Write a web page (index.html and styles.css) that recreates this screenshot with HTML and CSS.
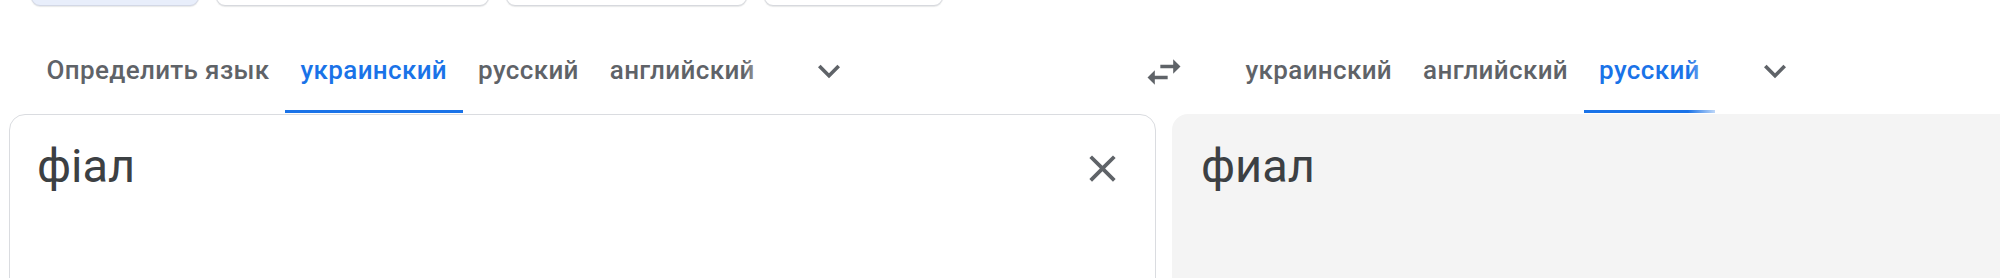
FILE: index.html
```html
<!DOCTYPE html>
<html lang="ru">
<head>
<meta charset="utf-8">
<title>Переводчик</title>
<link rel="stylesheet" href="styles.css">
</head>
<body>
<div class="page">
  <div class="chips">
    <div class="chip chip-active"></div>
    <div class="chip chip-2"></div>
    <div class="chip chip-3"></div>
    <div class="chip chip-4"></div>
  </div>

  <div class="tabrow">
    <div class="lang-section lang-source">
      <div class="tabs">
        <div class="tab">Определить язык</div>
        <div class="tab tab-active">украинский</div>
        <div class="tab">русский</div>
        <div class="tab">английский</div>
        <div class="fade"></div>
      </div>
      <button class="iconbtn chevron" aria-label="Другие языки">
        <svg viewBox="0 0 24 24" width="44" height="44"><path d="M16.59 8.59L12 13.17 7.41 8.59 6 10l6 6 6-6z"/></svg>
      </button>
    </div>
    <button class="iconbtn swap" aria-label="Поменять языки">
      <svg viewBox="0 0 24 24" width="44" height="44"><path d="M6.99 11L3 15l3.99 4v-3H14v-2H6.99v-3zM21 9l-3.99-4v3H10v2h7.01v3L21 9z"/></svg>
    </button>
    <div class="lang-section lang-target">
      <div class="tabs tabs-target">
        <div class="tab">украинский</div>
        <div class="tab">английский</div>
        <div class="tab tab-active">русский</div>
        <div class="fade"></div>
      </div>
      <button class="iconbtn chevron chevron-target" aria-label="Другие языки">
        <svg viewBox="0 0 24 24" width="44" height="44"><path d="M16.59 8.59L12 13.17 7.41 8.59 6 10l6 6 6-6z"/></svg>
      </button>
    </div>
  </div>

  <div class="panels">
    <div class="panel panel-source">
      <div class="text">фіал</div>
      <button class="iconbtn close" aria-label="Очистить">
        <svg viewBox="0 0 24 24" width="45" height="45"><path d="M19 6.41L17.59 5 12 10.59 6.41 5 5 6.41 10.59 12 5 17.59 6.41 19 12 13.41 17.59 19 19 17.59 13.41 12z"/></svg>
      </button>
    </div>
    <div class="panel panel-target">
      <div class="text">фиал</div>
    </div>
  </div>
</div>
</body>
</html>
```
FILE: styles.css
```css
html, body {
  margin: 0;
  padding: 0;
  background: #fff;
  overflow: hidden;
}
.page {
  width: 2000px;
  height: 278px;
  overflow: hidden;
  font-family: Roboto, "Noto Sans", Arial, sans-serif;
}
.chips {
  display: flex;
  gap: 17px;
  padding-left: 31px;
  margin-top: -50px;
  height: 56px;
}
.chip {
  height: 56px;
  border: 1px solid #d7d9de;
  border-radius: 9px;
  background: #fff;
  box-shadow: 0 1px 1px rgba(60, 64, 67, 0.12);
  box-sizing: border-box;
}
.chip-active { width: 168px; background: #e8eefb; border-color: #d3d8e6; }
.chip-2 { width: 273px; }
.chip-3 { width: 241px; }
.chip-4 { width: 179px; }

.tabrow {
  display: flex;
  align-items: stretch;
  padding-left: 9px;
  padding-top: 20px;
  height: 87px;
  margin-bottom: 1px;
}
.lang-section {
  display: flex;
  align-items: stretch;
}
.lang-source {
  width: 1132px;
  padding-left: 22px;
  box-sizing: border-box;
}
.lang-target {
  padding-left: 44px;
}
.tabs {
  position: relative;
  display: flex;
  width: 754px;
  overflow: hidden;
}
.tabs-target {
  width: 500px;
}
.tab {
  flex: none;
  display: flex;
  align-items: center;
  padding: 4px 15.5px 0;
  border-bottom: 3px solid transparent;
  font-size: 26px;
  font-weight: 500;
  letter-spacing: 0.35px;
  color: #5f6368;
  white-space: nowrap;
}
.tab-active {
  color: #1a73e8;
  border-bottom-color: #1a73e8;
}
.fade {
  position: absolute;
  right: 0;
  top: 0;
  bottom: 0;
  width: 42px;
  background: linear-gradient(to right, rgba(255, 255, 255, 0), #fff 90%);
}
.iconbtn {
  border: 0;
  padding: 0;
  margin: 0;
  background: none;
  display: flex;
  align-items: center;
  justify-content: center;
  fill: #5f6368;
}
.chevron {
  width: 44px;
  margin-left: 22px;
  padding-top: 2px;
}
.chevron-target {
  margin-left: 23px;
}
.swap {
  width: 45px;
  padding-top: 4px;
}

.panels {
  display: flex;
  gap: 16px;
  padding-left: 9px;
}
.panel {
  flex: none;
  width: 1147px;
  height: 200px;
  box-sizing: border-box;
  border-radius: 16px;
  display: flex;
  align-items: flex-start;
}
.panel-source {
  border: 1.5px solid #dadce0;
  padding: 19px 30px 0 27px;
}
.panel-target {
  background: #f4f4f4;
  padding: 20px 30px 0 29px;
}
.text {
  flex: 1;
  font-size: 47px;
  line-height: 64px;
  color: #3c4043;
}
.close {
  margin-top: 12px;
  width: 45px;
  height: 45px;
}
```
